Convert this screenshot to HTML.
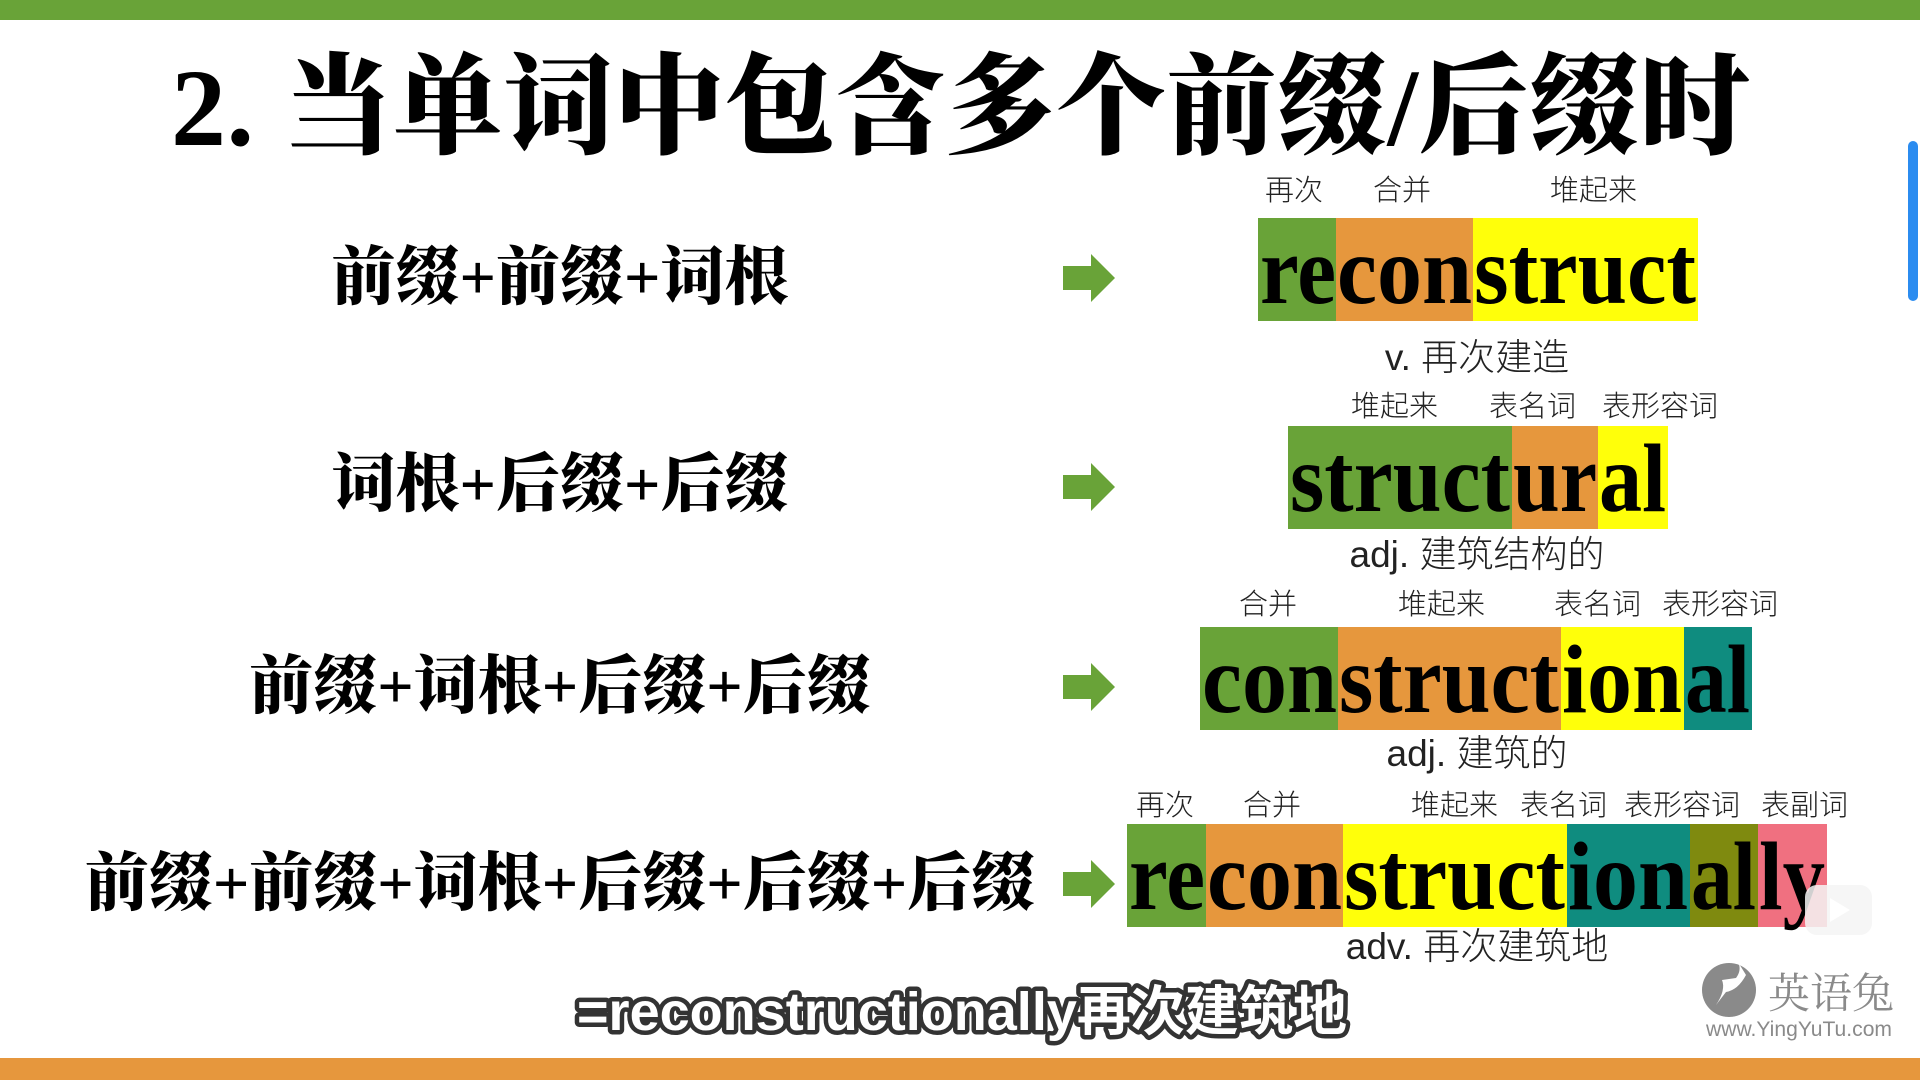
<!DOCTYPE html>
<html><head><meta charset="utf-8"><style>
body{margin:0;width:1920px;height:1080px;background:#fff;overflow:hidden;position:relative;font-family:"Liberation Sans","Noto Sans CJK SC",sans-serif}
.a{position:absolute;white-space:nowrap}
.lab{position:absolute;font-size:29px;color:#222;line-height:1;white-space:nowrap;font-family:"Liberation Sans","Noto Sans CJK SC",sans-serif;font-weight:300}
.def{position:absolute;font-size:37px;color:#222;line-height:1;white-space:nowrap;transform:translateX(-50%);font-weight:300}
.left{position:absolute;font-family:"Liberation Serif","Noto Serif CJK SC",serif;font-weight:900;font-size:64px;line-height:1;transform:translate(-50%,-50%);white-space:nowrap;color:#000}
</style></head><body>
<div class="a" style="left:0;top:0;width:1920px;height:20px;background:#69a338"></div>
<div class="a" style="left:0;top:1058px;width:1920px;height:22px;background:#e6973d"></div>
<div class="a" style="left:1908px;top:141px;width:10px;height:160px;background:#2b8cf0;border-radius:5px"></div>
<div class="a" style="left:171px;top:48px;font-family:'Liberation Serif','Noto Serif CJK SC',serif;font-weight:900;font-size:110px;line-height:1.1;letter-spacing:0.5px">2. 当单词中包含多个前缀/后缀时</div>

<div class="left" style="left:560px;top:278px">前缀+前缀+词根</div>
<div class="left" style="left:560px;top:485px">词根+后缀+后缀</div>
<div class="left" style="left:560px;top:687px">前缀+词根+后缀+后缀</div>
<div class="left" style="left:560px;top:884px">前缀+前缀+词根+后缀+后缀+后缀</div>

<svg class="a" style="left:0;top:0" width="1920" height="1080">
<defs><path id="ar" d="M0 12 H28 V0 L52 24 L28 48 V36 H0 Z" fill="#69a338"/></defs>
<use href="#ar" x="1063" y="254"/>
<use href="#ar" x="1063" y="463"/>
<use href="#ar" x="1063" y="663"/>
<use href="#ar" x="1063" y="860"/>
<g font-family="Liberation Serif,serif" font-weight="bold" font-size="97">
<rect x="1258" y="218" width="78" height="103" fill="#69a338"/><rect x="1336" y="218" width="137" height="103" fill="#e6973d"/><rect x="1473" y="218" width="225" height="103" fill="#ffff0a"/>
<text x="1260" y="303" textLength="76" lengthAdjust="spacingAndGlyphs">re</text><text x="1337" y="303" textLength="135" lengthAdjust="spacingAndGlyphs">con</text><text x="1474" y="303" textLength="222" lengthAdjust="spacingAndGlyphs">struct</text>
<rect x="1288" y="426" width="224" height="103" fill="#69a338"/><rect x="1512" y="426" width="86" height="103" fill="#e6973d"/><rect x="1598" y="426" width="70" height="103" fill="#ffff0a"/>
<text x="1290" y="511" textLength="220" lengthAdjust="spacingAndGlyphs">struct</text><text x="1513" y="511" textLength="84" lengthAdjust="spacingAndGlyphs">ur</text><text x="1599" y="511" textLength="67" lengthAdjust="spacingAndGlyphs">al</text>
<rect x="1200" y="627" width="138" height="103" fill="#69a338"/><rect x="1338" y="627" width="223" height="103" fill="#e6973d"/><rect x="1561" y="627" width="123" height="103" fill="#ffff0a"/><rect x="1684" y="627" width="68" height="103" fill="#0f8c7f"/>
<text x="1202" y="712" textLength="135" lengthAdjust="spacingAndGlyphs">con</text><text x="1339" y="712" textLength="220" lengthAdjust="spacingAndGlyphs">struct</text><text x="1562" y="712" textLength="120" lengthAdjust="spacingAndGlyphs">ion</text><text x="1685" y="712" textLength="65" lengthAdjust="spacingAndGlyphs">al</text>
<rect x="1127" y="824" width="79" height="103" fill="#69a338"/><rect x="1206" y="824" width="137" height="103" fill="#e6973d"/><rect x="1343" y="824" width="224" height="103" fill="#ffff0a"/><rect x="1567" y="824" width="123" height="103" fill="#0f8c7f"/><rect x="1690" y="824" width="68" height="103" fill="#7f8a0f"/><rect x="1758" y="824" width="69" height="103" fill="#f07080"/>
<text x="1129" y="909" textLength="76" lengthAdjust="spacingAndGlyphs">re</text><text x="1207" y="909" textLength="135" lengthAdjust="spacingAndGlyphs">con</text><text x="1344" y="909" textLength="221" lengthAdjust="spacingAndGlyphs">struct</text><text x="1568" y="909" textLength="120" lengthAdjust="spacingAndGlyphs">ion</text><text x="1691" y="909" textLength="65" lengthAdjust="spacingAndGlyphs">al</text><text x="1759" y="909" textLength="66" lengthAdjust="spacingAndGlyphs">ly</text>
</g>
<text x="962" y="1030" font-family="Liberation Sans,Noto Sans CJK SC,sans-serif" font-weight="bold" font-size="54" fill="#fff" stroke="#333" stroke-width="9" paint-order="stroke" stroke-linejoin="round" textLength="770" lengthAdjust="spacingAndGlyphs" text-anchor="middle">=reconstructionally再次建筑地</text>
<rect x="1805" y="885" width="67" height="50" rx="12" fill="#f4f4f4" opacity="0.85"/>
<path d="M1830 898 L1850 910 L1830 922 Z" fill="#fff"/>
<circle cx="1729" cy="990" r="27" fill="#8a8a8a"/>
<path d="M1716 1005 Q1726 990 1722 980 L1736 978 Q1742 970 1738 962 L1746 975 Q1738 990 1726 992 Z" fill="#fff"/>
<text x="1768" y="1008" font-family="Noto Serif CJK SC,serif" font-size="42" fill="#8a8a8a">英语兔</text>
<text x="1706" y="1036" font-family="Liberation Sans,sans-serif" font-size="21" fill="#8a8a8a" textLength="186" lengthAdjust="spacingAndGlyphs">www.YingYuTu.com</text>
</svg>

<div class="lab" style="left:1265px;top:177px">再次</div><div class="lab" style="left:1373px;top:177px">合并</div><div class="lab" style="left:1550px;top:177px">堆起来</div>
<div class="def" style="left:1477px;top:339px">v. 再次建造</div>
<div class="lab" style="left:1351px;top:393px">堆起来</div><div class="lab" style="left:1489px;top:393px">表名词</div><div class="lab" style="left:1602px;top:393px">表形容词</div>
<div class="def" style="left:1477px;top:536px">adj. 建筑结构的</div>
<div class="lab" style="left:1239px;top:591px">合并</div><div class="lab" style="left:1398px;top:591px">堆起来</div><div class="lab" style="left:1554px;top:591px">表名词</div><div class="lab" style="left:1662px;top:591px">表形容词</div>
<div class="def" style="left:1477px;top:735px">adj. 建筑的</div>
<div class="lab" style="left:1136px;top:792px">再次</div><div class="lab" style="left:1243px;top:792px">合并</div><div class="lab" style="left:1411px;top:792px">堆起来</div><div class="lab" style="left:1520px;top:792px">表名词</div><div class="lab" style="left:1624px;top:792px">表形容词</div><div class="lab" style="left:1761px;top:792px">表副词</div>
<div class="def" style="left:1477px;top:928px">adv. 再次建筑地</div>
</body></html>
